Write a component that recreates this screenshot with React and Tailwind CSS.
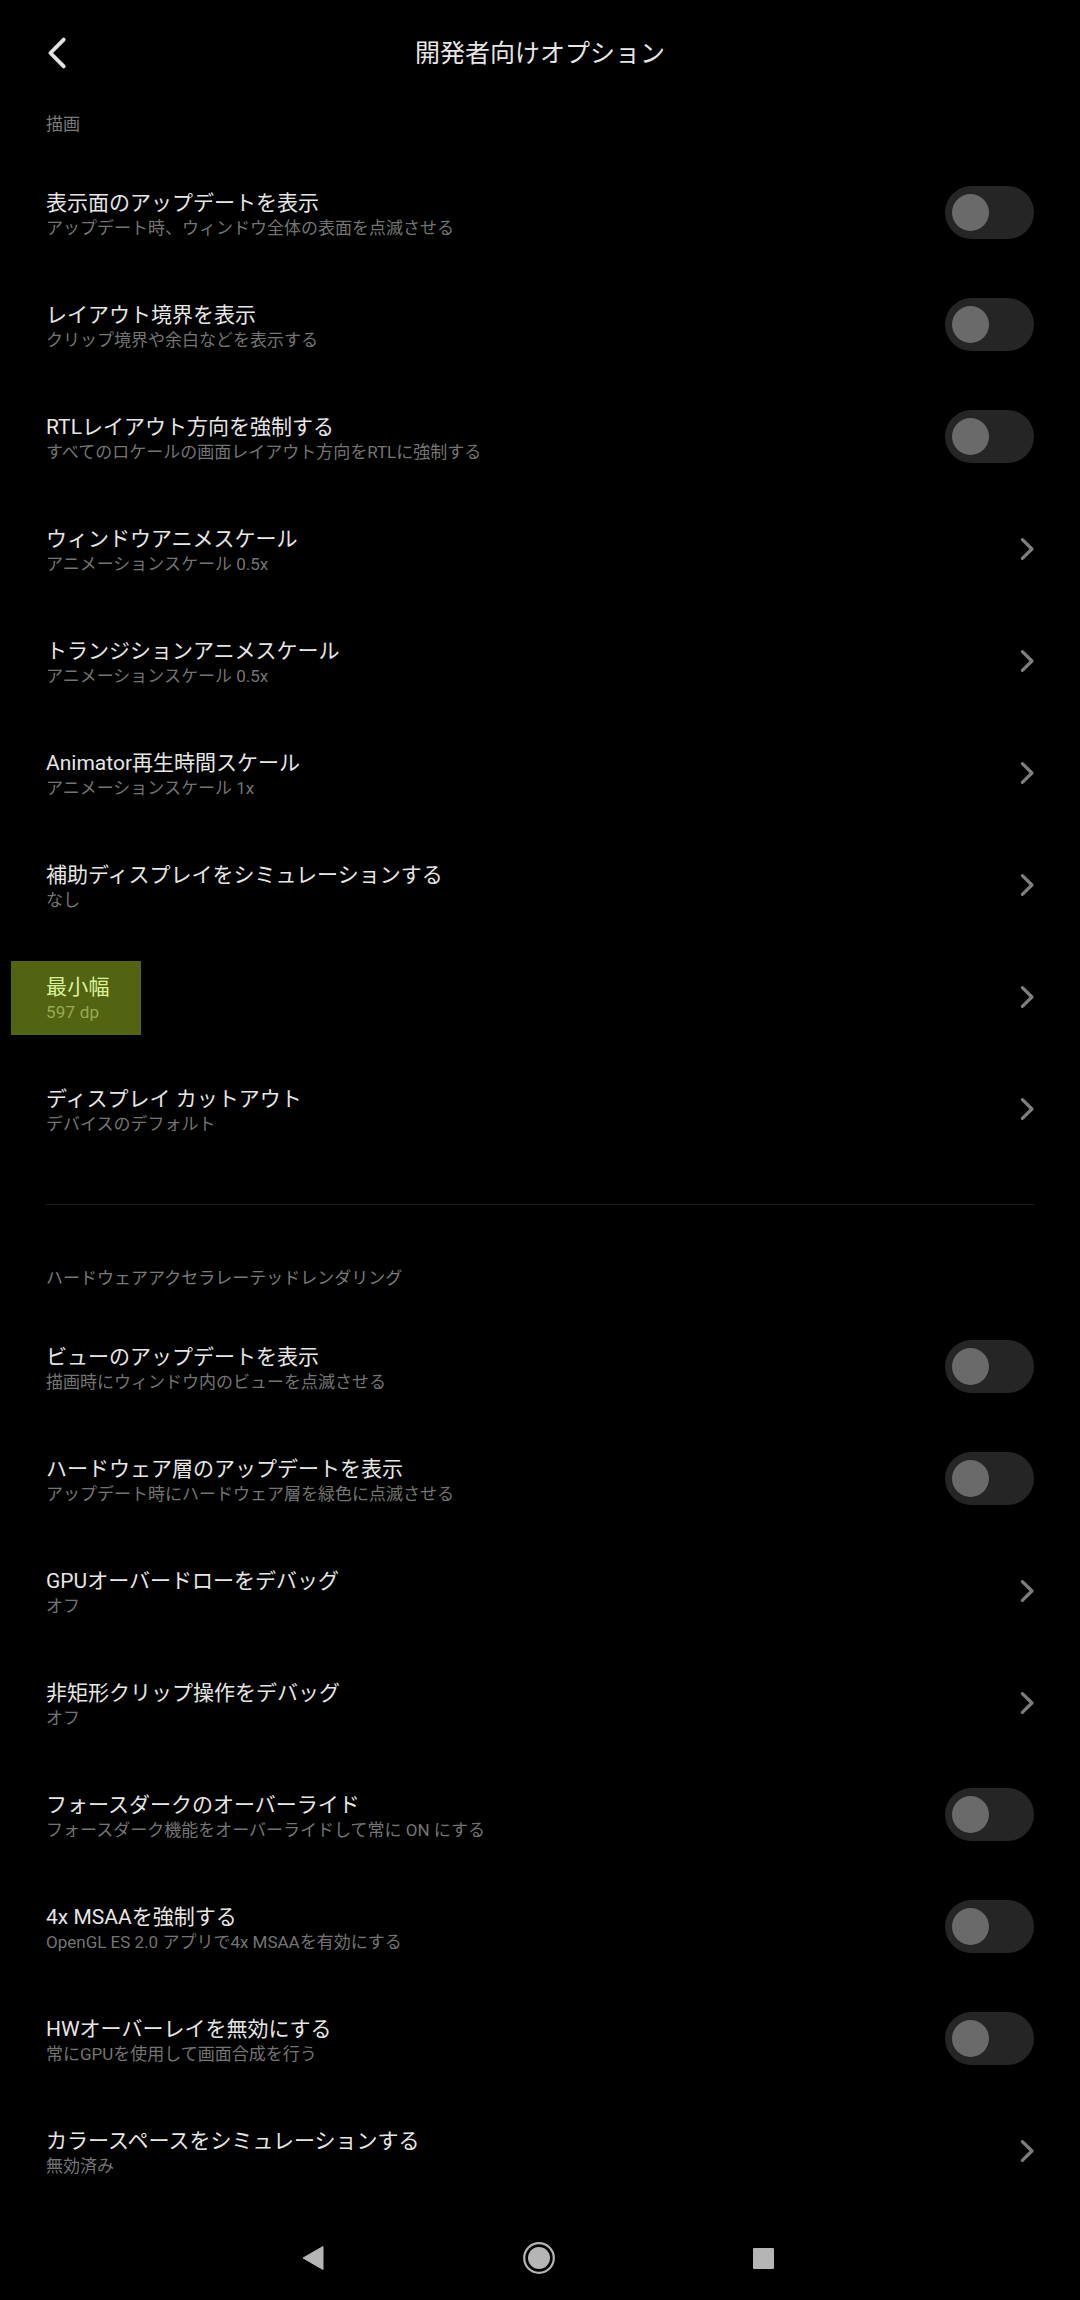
import React, { useState } from 'react';

const drawingItems = [
  { title: '表示面のアップデートを表示', summary: 'アップデート時、ウィンドウ全体の表面を点滅させる', type: 'switch' },
  { title: 'レイアウト境界を表示', summary: 'クリップ境界や余白などを表示する', type: 'switch' },
  { title: 'RTLレイアウト方向を強制する', summary: 'すべてのロケールの画面レイアウト方向をRTLに強制する', type: 'switch' },
  { title: 'ウィンドウアニメスケール', summary: 'アニメーションスケール 0.5x', type: 'link' },
  { title: 'トランジションアニメスケール', summary: 'アニメーションスケール 0.5x', type: 'link' },
  { title: 'Animator再生時間スケール', summary: 'アニメーションスケール 1x', type: 'link' },
  { title: '補助ディスプレイをシミュレーションする', summary: 'なし', type: 'link' },
  { title: '最小幅', summary: '597 dp', type: 'link', highlighted: true },
  { title: 'ディスプレイ カットアウト', summary: 'デバイスのデフォルト', type: 'link' },
];

const renderingItems = [
  { title: 'ビューのアップデートを表示', summary: '描画時にウィンドウ内のビューを点滅させる', type: 'switch' },
  { title: 'ハードウェア層のアップデートを表示', summary: 'アップデート時にハードウェア層を緑色に点滅させる', type: 'switch' },
  { title: 'GPUオーバードローをデバッグ', summary: 'オフ', type: 'link' },
  { title: '非矩形クリップ操作をデバッグ', summary: 'オフ', type: 'link' },
  { title: 'フォースダークのオーバーライド', summary: 'フォースダーク機能をオーバーライドして常に ON にする', type: 'switch' },
  { title: '4x MSAAを強制する', summary: 'OpenGL ES 2.0 アプリで4x MSAAを有効にする', type: 'switch' },
  { title: 'HWオーバーレイを無効にする', summary: '常にGPUを使用して画面合成を行う', type: 'switch' },
  { title: 'カラースペースをシミュレーションする', summary: '無効済み', type: 'link' },
];

function Switch() {
  const [on, setOn] = useState(false);

  return (
    <button
      type="button"
      role="switch"
      aria-checked={on}
      onClick={() => setOn(prev => !prev)}
      className={`mt-px flex h-[53px] w-[89px] items-center rounded-full px-[7px] ${on ? 'justify-end bg-blue-600' : 'justify-start bg-[#252525]'}`}
    >
      <span className={`size-[37px] rounded-full ${on ? 'bg-white' : 'bg-[#6a6a6a]'}`} />
    </button>
  );
}

function Chevron() {
  return (
    <svg className="mt-0.5" width="15" height="24" viewBox="0 0 15 24" fill="none" stroke="#7e7e7e" strokeWidth="3.2" strokeLinecap="round" strokeLinejoin="round">
      <path d="M3.4 2.6L12.9 12L3.4 21.4" />
    </svg>
  );
}

function Row({ item }) {
  return (
    <li className="flex h-28 items-center justify-between">
      <div className={`mt-1 flex h-[74px] flex-col justify-center pt-[2px] ${item.highlighted ? '-ml-[35px] w-[130px] bg-[#526412] pl-[35px] tracking-[0.2px]' : ''}`}>
        <p className={`text-[21px] leading-[26px] ${item.highlighted ? 'text-[#dcf29a]' : 'text-[#e6e6e6]'}`}>{item.title}</p>
        <p className={`text-[17px] leading-6 ${item.highlighted ? 'text-[#97aa52]' : 'text-[#747474]'}`}>{item.summary}</p>
      </div>
      {item.type === 'switch' ? <Switch /> : <Chevron />}
    </li>
  );
}

export default function App() {
  return (
    <div className="flex h-[2300px] w-[1080px] flex-col bg-black font-[Roboto,'Noto_Sans_CJK_JP',sans-serif] text-[#e6e6e6]">
      {/* Header */}
      <header className="grid h-[105px] grid-cols-[1fr_auto_1fr] items-center px-[46px]">
        <button type="button" aria-label="戻る" className="justify-self-start">
          <svg width="22" height="34" viewBox="0 0 22 34" fill="none" stroke="#e2e2e2" strokeWidth="3.9" strokeLinecap="round" strokeLinejoin="round">
            <path d="M17.7 3.6L4.4 17L17.7 30.4" />
          </svg>
        </button>
        <h1 className="mt-0.5 text-[25px] leading-9">開発者向けオプション</h1>
      </header>

      <main className="px-[46px]">
        <h2 className="h-[51px] pt-[7px] text-[17px] leading-6 text-[#7a7a7a]">描画</h2>
        <ul>
          {drawingItems.map(item => <Row key={item.title} item={item} />)}
        </ul>

        <hr className="mt-10 border-t border-[#1c1c1c]" />

        <h2 className="h-[105px] pt-[61px] text-[17px] leading-6 text-[#7a7a7a]">ハードウェアアクセラレーテッドレンダリング</h2>
        <ul>
          {renderingItems.map(item => <Row key={item.title} item={item} />)}
        </ul>
      </main>

      {/* System navigation */}
      <nav className="mt-auto flex h-[84px] items-center justify-between pr-[306px] pl-[302px]">
        <svg width="22" height="26" viewBox="0 0 22 26" fill="#b5b5b5">
          <path d="M21 1.5V24.5L1 13Z" stroke="#b5b5b5" strokeWidth="1" strokeLinejoin="round" />
        </svg>
        <svg className="ml-px" width="32" height="32" viewBox="0 0 32 32">
          <circle cx="16" cy="16" r="14.8" fill="none" stroke="#b5b5b5" strokeWidth="2.2" />
          <circle cx="16" cy="16" r="11" fill="#b5b5b5" />
        </svg>
        <span className="size-[21px] rounded-[1px] bg-[#b5b5b5]" />
      </nav>
    </div>
  );
}
